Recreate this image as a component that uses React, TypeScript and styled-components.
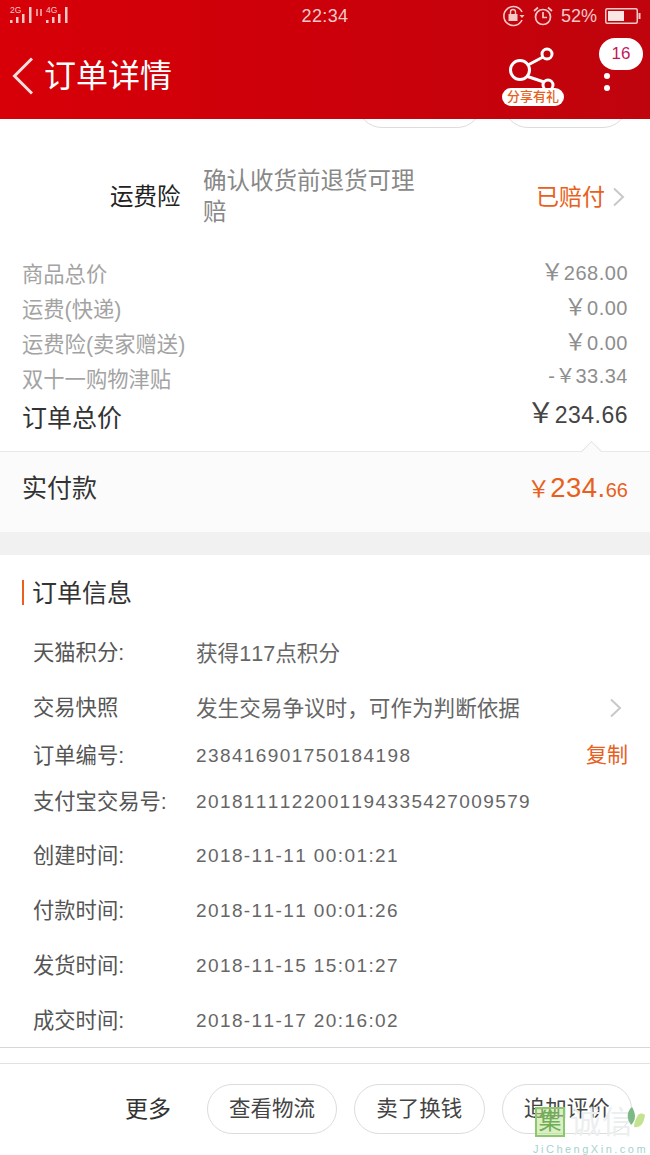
import React from 'react';
import styled, { createGlobalStyle } from 'styled-components';

const GlobalStyle = createGlobalStyle`
  html, body {
    margin: 0;
    padding: 0;
    background: #fff;
  }
  * {
    box-sizing: border-box;
  }
`;

const FONT = `"Liberation Sans", "Noto Sans CJK SC", sans-serif`;
const ORANGE = '#e8601c';
const YEN = '\uFFE5';
const COMMA = '\uFF0C';

const Page = styled.div`
  position: relative;
  width: 650px;
  height: 1155px;
  overflow: hidden;
  background: #fff;
  font-family: ${FONT};
  color: #333;
`;

const Header = styled.header`
  height: 119px;
  background: linear-gradient(90deg, #d70008 0%, #cc000a 50%, #bf040d 100%);
  color: #fff;
  display: flex;
  flex-direction: column;
`;

const StatusBar = styled.div`
  height: 32px;
  padding: 0 9px;
  display: grid;
  grid-template-columns: 1fr auto 1fr;
  align-items: center;
  color: #f6c9c9;
`;

const SignalGroup = styled.div`
  display: flex;
  align-items: center;
  gap: 2px;
`;

const StatusRight = styled.div`
  display: flex;
  justify-content: flex-end;
  align-items: center;
  gap: 8px;
  font-size: 18px;
`;

const Clock = styled.span`
  font-size: 18px;
  letter-spacing: 0.4px;
`;

const NavBar = styled.div`
  flex: 1;
  display: flex;
  align-items: center;
  padding: 0 0 0 12px;
`;

const NavTitle = styled.h1`
  margin: 0 0 0 10px;
  font-size: 32px;
  line-height: 40px;
  font-weight: 400;
`;

const NavActions = styled.div`
  margin-left: auto;
  align-self: flex-start;
  display: flex;
  align-items: flex-start;
  padding-right: 7px;
`;

const ShareButton = styled.div`
  position: relative;
  width: 62px;
  height: 64px;
  margin: 10px 35px 0 0;
`;

const ShareBadge = styled.span`
  position: absolute;
  left: 0;
  bottom: 0;
  width: 62px;
  height: 18px;
  border-radius: 9px;
  background: #fff;
  color: ${ORANGE};
  font-size: 13px;
  font-weight: 500;
  line-height: 18px;
  text-align: center;
`;

const MoreButton = styled.div`
  width: 44px;
  display: flex;
  flex-direction: column;
  align-items: flex-start;
`;

const CountBubble = styled.span`
  width: 44px;
  height: 32px;
  border-radius: 16px;
  background: #fff;
  color: #c2185b;
  font-size: 17px;
  line-height: 32px;
  text-align: center;
  margin-top: 6px;
`;

const DotStack = styled.div`
  margin: 3px 0 0 5px;
  display: flex;
  flex-direction: column;
  gap: 6px;
`;

const Dot = styled.i`
  width: 6px;
  height: 6px;
  border-radius: 50%;
  background: #fff;
`;

const Stubs = styled.div`
  height: 9px;
  overflow: hidden;
  display: flex;
  justify-content: flex-end;
  gap: 21px;
  padding-right: 22px;
`;

const Stub = styled.div`
  width: 125px;
  height: 50px;
  margin-top: -41px;
  border: 1px solid #dcdcdc;
  border-radius: 25px;
`;

const InsuranceRow = styled.section`
  height: 127px;
  padding: 38px 25px 0 110px;
  display: flex;
  align-items: flex-start;
`;

const InsuranceLabel = styled.span`
  width: 93px;
  margin-top: 15px;
  font-size: 23.5px;
  line-height: 32px;
  color: #222;
`;

const InsuranceText = styled.p`
  margin: 0;
  width: 222px;
  font-size: 23.5px;
  line-height: 31px;
  color: #888;
`;

const InsuranceState = styled.span`
  margin-left: auto;
  margin-top: 15px;
  display: flex;
  align-items: center;
  gap: 7px;
  font-size: 23px;
  line-height: 32px;
  color: ${ORANGE};
`;

const PriceList = styled.section`
  padding: 0 22px;
`;

const PriceRow = styled.div`
  height: 35px;
  display: flex;
  justify-content: space-between;
  align-items: center;
  font-size: 21.3px;
  color: #a3a3a3;
`;

const PriceNumber = styled.span`
  padding-bottom: 2px;
  font-size: 20px;
  letter-spacing: 0.5px;
  color: #8e8e8e;
`;

const TotalRow = styled.div`
  height: 41px;
  display: flex;
  justify-content: space-between;
  align-items: center;
  font-size: 25px;
  color: #333;
`;

const TotalNumber = styled.span`
  padding-bottom: 5px;
  font-size: 23px;
  letter-spacing: 0.5px;
  color: #444;
`;

const Yen = styled.span<{ $size: number }>`
  font-family: "Noto Sans CJK SC", sans-serif;
  font-size: ${(p) => p.$size}px;
  line-height: 1;
  letter-spacing: 0;
`;

const PaidBox = styled.section`
  position: relative;
  height: 81px;
  margin-top: 15px;
  padding: 0 22px 12px;
  display: flex;
  justify-content: space-between;
  align-items: center;
  background: #fbfbfb;
  border-top: 1px solid #e8e8e8;
`;

const Caret = styled.i`
  position: absolute;
  top: -8px;
  left: 584px;
  width: 15px;
  height: 15px;
  background: #fbfbfb;
  border-top: 1px solid #e4e4e4;
  border-left: 1px solid #e4e4e4;
  transform: rotate(45deg);
`;

const PaidLabel = styled.span`
  font-size: 25px;
  color: #333;
`;

const PaidAmount = styled.span`
  padding-top: 3px;
  color: ${ORANGE};
  font-size: 27.5px;
  letter-spacing: 0.5px;
`;

const PaidCents = styled.span`
  font-size: 20px;
  letter-spacing: 0;
`;

const Gap = styled.div`
  height: 23px;
  background: #f1f1f1;
`;

const InfoSection = styled.section`
  height: 493px;
  padding-top: 25px;
  border-bottom: 1px solid #d6d6d6;
`;

const InfoTitle = styled.h2`
  margin: 0 0 18px 22px;
  padding-left: 8px;
  height: 25px;
  border-left: 2px solid ${ORANGE};
  font-size: 25px;
  line-height: 34px;
  font-weight: 400;
  display: flex;
  align-items: center;
  color: #333;
`;

const InfoRow = styled.div<{ $h: number }>`
  height: ${(p) => p.$h}px;
  padding: 0 22px 0 33px;
  display: flex;
  align-items: center;
`;

const InfoLabel = styled.span`
  width: 163px;
  flex: none;
  font-size: 21.3px;
  color: #555;
`;

const InfoValue = styled.span<{ $digits?: boolean }>`
  font-size: ${(p) => (p.$digits ? 19 : 21.6)}px;
  letter-spacing: ${(p) => (p.$digits ? 1.4 : 0)}px;
  font-kerning: none;
  padding-top: ${(p) => (p.$digits ? 5 : 2)}px;
  color: #666;
`;

const InfoEnd = styled.span<{ $inset?: number }>`
  margin-left: auto;
  margin-right: ${(p) => p.$inset ?? 0}px;
  padding-top: ${(p) => (p.$inset ? 4 : 0)}px;
  font-size: 21px;
  color: ${ORANGE};
  display: flex;
`;

const BottomBar = styled.footer`
  margin-top: 15px;
  height: 91px;
  padding: 0 18px 1px 125px;
  border-top: 1px solid #e2e2e2;
  display: flex;
  align-items: center;
  gap: 17px;
`;

const MoreLabel = styled.span`
  width: 65px;
  margin-bottom: 3px;
  font-size: 23px;
  color: #333;
`;

const ActionButton = styled.span`
  width: 131px;
  height: 50px;
  border: 1px solid #dcdcdc;
  border-radius: 25px;
  font-size: 21.5px;
  line-height: 49px;
  text-align: center;
  color: #444;
`;

const Watermark = styled.div`
  position: absolute;
  left: 533px;
  top: 1104px;
  width: 117px;
  height: 51px;
  pointer-events: none;
`;

const WatermarkBox = styled.span`
  position: absolute;
  left: 2px;
  top: 3px;
  width: 30px;
  height: 30px;
  border: 2px solid #8cc76e;
  background: rgba(190, 225, 150, 0.55);
  color: #6fae55;
  font-size: 23px;
  line-height: 25px;
  text-align: center;
`;

const WatermarkName = styled.span`
  position: absolute;
  left: 37px;
  top: 1px;
  font-size: 31px;
  line-height: 36px;
  letter-spacing: 1px;
  color: #eceff0;
`;

const WatermarkLeaf = styled.svg`
  position: absolute;
  left: 94px;
  top: 3px;
`;

const WatermarkUrl = styled.span`
  position: absolute;
  left: 0;
  top: 38px;
  font-size: 11px;
  line-height: 14px;
  letter-spacing: 2.5px;
  white-space: nowrap;
  color: #a5d3d0;
`;

const Signal = ({ label }: { label: string }) => (
  <svg width="24" height="20" viewBox="0 0 24 20">
    <text x="1" y="7" fontSize="8.5" fill="#f6c9c9" fontFamily="Liberation Sans">{label}</text>
    <g fill="#f6c9c9">
      <rect x="1" y="14" width="2.5" height="3" />
      <rect x="7" y="11" width="2.5" height="6" />
      <rect x="13" y="8" width="2.5" height="9" />
      <rect x="20" y="1" width="2.5" height="16" />
    </g>
  </svg>
);

const Chevron = ({ size = 20, color = '#c8c8c8' }: { size?: number; color?: string }) => (
  <svg width={size * 0.65} height={size} viewBox="0 0 13 20" fill="none">
    <path d="M2 1.5 L11 10 L2 18.5" stroke={color} strokeWidth="2" />
  </svg>
);

const App = () => (
  <Page>
    <GlobalStyle />
    <Header>
      <StatusBar>
        <SignalGroup>
          <Signal label="2G" />
          <svg width="8" height="20" viewBox="0 0 8 20">
            <path d="M2 3v7M6 3v7" stroke="#f6c9c9" strokeWidth="1.4" />
          </svg>
          <Signal label="4G" />
        </SignalGroup>
        <Clock>22:34</Clock>
        <StatusRight>
          <svg width="23" height="22" viewBox="0 0 23 22" fill="none">
            <path d="M20 7A9.5 9.5 0 1 0 20 15" stroke="#f6c9c9" strokeWidth="1.6" />
            <path d="M17.5 10h5l-2.5 3z" fill="#f6c9c9" />
            <rect x="6.5" y="9" width="9" height="7" fill="#f6c9c9" />
            <path d="M8.5 9V7a2.5 2.5 0 0 1 5 0v2" stroke="#f6c9c9" strokeWidth="1.4" />
          </svg>
          <svg width="20" height="20" viewBox="0 0 20 20" fill="none" stroke="#f6c9c9" strokeWidth="1.7">
            <circle cx="10" cy="11" r="7.5" />
            <path d="M10 6v5.5h4M1 5l4-3.5M19 5l-4-3.5" />
          </svg>
          <span>52%</span>
          <svg width="36" height="16" viewBox="0 0 36 16">
            <rect x="0.75" y="0.75" width="31.5" height="14.5" rx="1.5" fill="none" stroke="#f6c9c9" strokeWidth="1.5" />
            <rect x="3" y="3" width="16" height="10" fill="#fbe6e6" />
            <rect x="33.5" y="5" width="2" height="6" fill="#f6c9c9" />
          </svg>
        </StatusRight>
      </StatusBar>
      <NavBar>
        <svg width="22" height="38" viewBox="0 0 22 38" fill="none">
          <path d="M20 1.5 L2.5 19 L20 36.5" stroke="#f5dede" strokeWidth="3" />
        </svg>
        <NavTitle>订单详情</NavTitle>
        <NavActions>
          <ShareButton>
            <svg width="62" height="50" viewBox="0 0 62 50" fill="none" stroke="#fff" strokeWidth="3">
              <circle cx="18" cy="28" r="9.5" />
              <circle cx="45" cy="12" r="5" />
              <circle cx="46" cy="43" r="5" />
              <path d="M26 23 L41 15 M25.5 34.5 L42 40" />
            </svg>
            <ShareBadge>分享有礼</ShareBadge>
          </ShareButton>
          <MoreButton>
            <CountBubble>16</CountBubble>
            <DotStack>
              <Dot />
              <Dot />
            </DotStack>
          </MoreButton>
        </NavActions>
      </NavBar>
    </Header>

    <Stubs>
      <Stub />
      <Stub />
    </Stubs>

    <InsuranceRow>
      <InsuranceLabel>运费险</InsuranceLabel>
      <InsuranceText>确认收货前退货可理赔</InsuranceText>
      <InsuranceState>
        已赔付
        <Chevron />
      </InsuranceState>
    </InsuranceRow>

    <PriceList>
      <PriceRow>商品总价<PriceNumber><Yen $size={23}>{YEN}</Yen>268.00</PriceNumber></PriceRow>
      <PriceRow>运费(快递)<PriceNumber><Yen $size={23}>{YEN}</Yen>0.00</PriceNumber></PriceRow>
      <PriceRow>运费险(卖家赠送)<PriceNumber><Yen $size={23}>{YEN}</Yen>0.00</PriceNumber></PriceRow>
      <PriceRow>双十一购物津贴<PriceNumber>-<Yen $size={20}>{YEN}</Yen>33.34</PriceNumber></PriceRow>
      <TotalRow>订单总价<TotalNumber><Yen $size={28}>{YEN}</Yen>234.66</TotalNumber></TotalRow>
    </PriceList>

    <PaidBox>
      <Caret />
      <PaidLabel>实付款</PaidLabel>
      <PaidAmount><Yen $size={23}>{YEN}</Yen>234.<PaidCents>66</PaidCents></PaidAmount>
    </PaidBox>
    <Gap />

    <InfoSection>
      <InfoTitle>订单信息</InfoTitle>
      <InfoRow $h={55}>
        <InfoLabel>天猫积分:</InfoLabel>
        <InfoValue>获得117点积分</InfoValue>
      </InfoRow>
      <InfoRow $h={55}>
        <InfoLabel>交易快照</InfoLabel>
        <InfoValue>发生交易争议时{COMMA}可作为判断依据</InfoValue>
        <InfoEnd $inset={6}><Chevron /></InfoEnd>
      </InfoRow>
      <InfoRow $h={40}>
        <InfoLabel>订单编号:</InfoLabel>
        <InfoValue $digits>238416901750184198</InfoValue>
        <InfoEnd>复制</InfoEnd>
      </InfoRow>
      <InfoRow $h={53}>
        <InfoLabel>支付宝交易号:</InfoLabel>
        <InfoValue $digits>2018111122001194335427009579</InfoValue>
      </InfoRow>
      <InfoRow $h={55}>
        <InfoLabel>创建时间:</InfoLabel>
        <InfoValue $digits>2018-11-11 00:01:21</InfoValue>
      </InfoRow>
      <InfoRow $h={55}>
        <InfoLabel>付款时间:</InfoLabel>
        <InfoValue $digits>2018-11-11 00:01:26</InfoValue>
      </InfoRow>
      <InfoRow $h={55}>
        <InfoLabel>发货时间:</InfoLabel>
        <InfoValue $digits>2018-11-15 15:01:27</InfoValue>
      </InfoRow>
      <InfoRow $h={55}>
        <InfoLabel>成交时间:</InfoLabel>
        <InfoValue $digits>2018-11-17 20:16:02</InfoValue>
      </InfoRow>
    </InfoSection>

    <BottomBar>
      <MoreLabel>更多</MoreLabel>
      <ActionButton>查看物流</ActionButton>
      <ActionButton>卖了换钱</ActionButton>
      <ActionButton>追加评价</ActionButton>
    </BottomBar>

    <Watermark>
      <WatermarkBox>集</WatermarkBox>
      <WatermarkName>诚信</WatermarkName>
      <WatermarkLeaf width="20" height="24" viewBox="0 0 20 24">
        <path d="M5 0C0 4 -1 11 4 18c4-3 6-10 1-18z" fill="#7cb987" />
        <path d="M7 20c5 1 10-2 11-12-2-2-5-2-7 0-2 4-4 7-4 12z" fill="#c4e391" />
      </WatermarkLeaf>
      <WatermarkUrl>JiChengXin.com</WatermarkUrl>
    </Watermark>
  </Page>
);

export default App;
